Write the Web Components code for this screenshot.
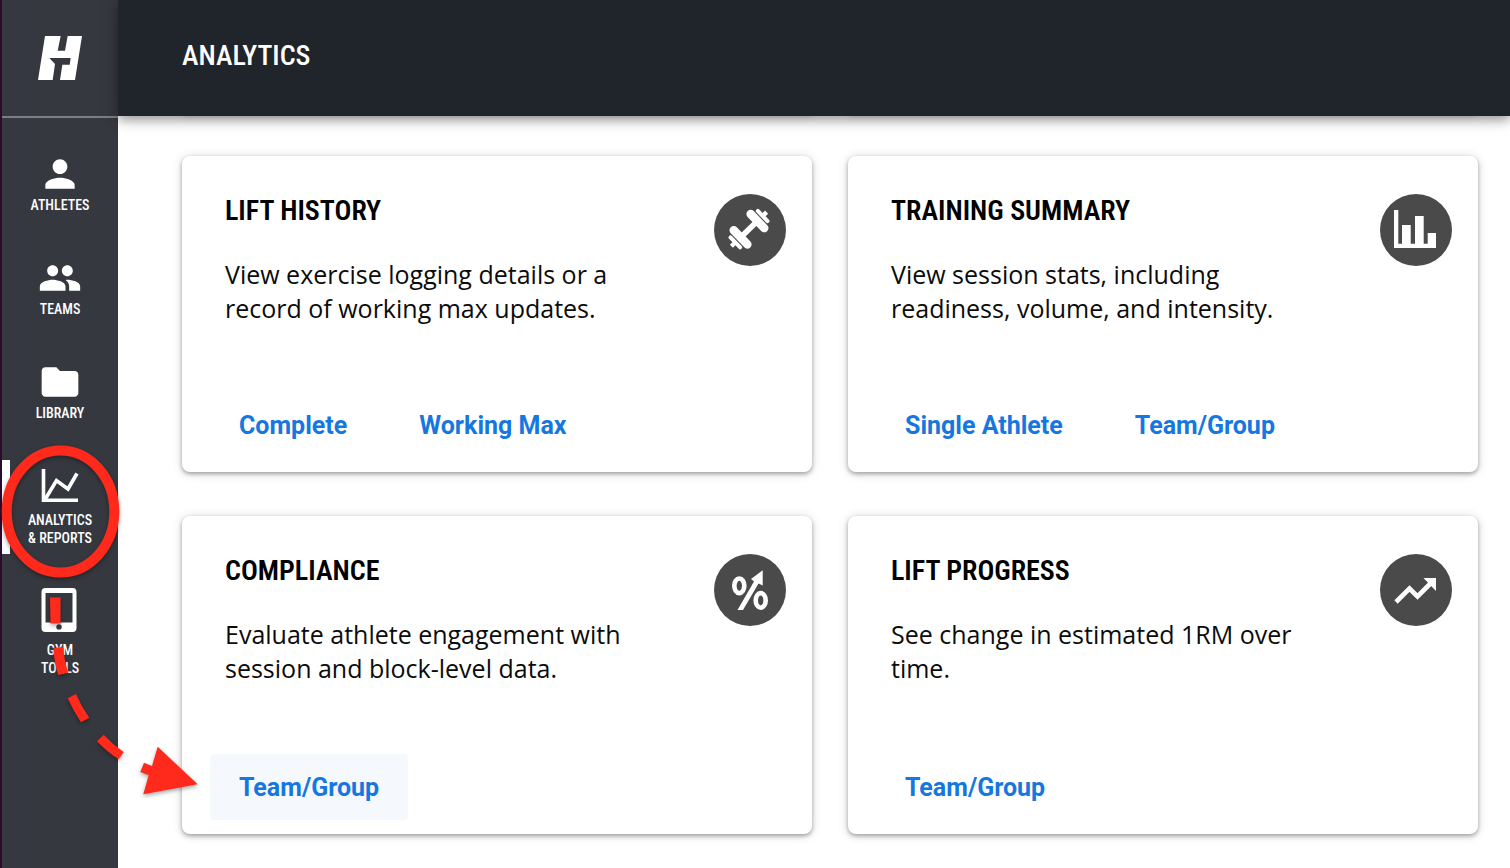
<!DOCTYPE html>
<html lang="en">
<head>
<meta charset="utf-8">
<meta name="viewport" content="width=device-width, initial-scale=1">
<title>Analytics</title>
<style>
  html, body { margin: 0; height: 100%; }
  body { background: #fff; }
</style>
</head>
<body>
<analytics-app></analytics-app>
<script>
const ICONS = {
  athletes: '<svg viewBox="0 0 24 24"><path d="M12 12c2.21 0 4-1.79 4-4s-1.79-4-4-4-4 1.79-4 4 1.79 4 4 4zm0 2c-2.67 0-8 1.34-8 4v2h16v-2c0-2.66-5.33-4-8-4z"/></svg>',
  teams: '<svg viewBox="0 0 24 24"><path d="M16 11c1.66 0 2.99-1.34 2.99-3S17.66 5 16 5s-3 1.34-3 3 1.34 3 3 3zm-8 0c1.66 0 2.99-1.34 2.99-3S9.66 5 8 5 5 6.34 5 8s1.34 3 3 3zm0 2c-2.33 0-7 1.17-7 3.500V19h14v-2.500c0-2.330-4.670-3.500-7-3.500zm8 0c-.29 0-.62.02-.97.05 1.160.84 1.970 1.970 1.970 3.450V19h6v-2.500c0-2.330-4.670-3.500-7-3.500z"/></svg>',
  library: '<svg viewBox="0 0 24 24"><path d="M10 4H4c-1.1 0-1.990.9-1.990 2L2 18c0 1.100.9 2 2 2h16c1.100 0 2-.9 2-2V8c0-1.100-.9-2-2-2h-8l-2-2z"/></svg>',
  analytics: '<svg viewBox="0 0 44 44"><path d="M5.500 6v31.200H40" fill="none" stroke="#fff" stroke-width="3.600"/><path d="M7 36.500 18.500 17.500 30 26 39 10.500" fill="none" stroke="#fff" stroke-width="3.600"/></svg>',
  gym: '<svg viewBox="0 0 44 44"><path fill-rule="evenodd" d="M7.500 0h27a4 4 0 0 1 4 4v36a4 4 0 0 1-4 4h-27a4 4 0 0 1-4-4V4a4 4 0 0 1 4-4zM7.500 5v29.500h27V5zM21 36.200a2.700 2.700 0 1 0 0 5.400 2.700 2.700 0 0 0 0-5.400z"/></svg>',
  dumbbell: '<svg viewBox="0 0 72 72"><g transform="translate(35 35.200) rotate(-44)" fill="#fff"><rect x="-10" y="-2.800" width="20" height="5.600"/><rect x="-16" y="-14" width="8.500" height="28" rx="4.200"/><rect x="7.500" y="-14" width="8.500" height="28" rx="4.200"/><rect x="-21" y="-9" width="4" height="18" rx="2"/><rect x="17" y="-9" width="4" height="18" rx="2"/><path d="M-24.500-2.200h5v4.400h-5zM19.500-2.200h5v4.400h-5z"/></g></svg>',
  bars: '<svg viewBox="0 0 72 72"><path d="M14 16h4.300v33.700H22V31h8.700v18.700H35V22h8.700v27.700h4V39H56v15H14z" fill="#fff"/></svg>',
  percent: '<svg viewBox="0 0 72 72"><g fill="none" stroke="#fff" stroke-width="4.600"><ellipse cx="25.300" cy="31.800" rx="5" ry="7.300"/><ellipse cx="46.700" cy="46.400" rx="5" ry="7.300"/></g><path d="M23.500 56 40 27.500 37 25 48.700 16.300V31.500L44.500 29.500 29 56z" fill="#fff"/></svg>',
  trend: '<svg viewBox="0 0 72 72"><path d="M16 48 29.500 34.500 37.500 42.500 52 28" fill="none" stroke="#fff" stroke-width="4.600"/><path d="M43.500 24H56V37z" fill="#fff"/></svg>'
};
const CAPS = '"Roboto Condensed", "Liberation Sans Narrow", Roboto, sans-serif';

class NavItem extends HTMLElement {
  connectedCallback() {
    this.attachShadow({ mode: 'open' }).innerHTML = `
      <style>
        :host { display: block; min-height: 70px; }
        :host([active]) { min-height: 94px; margin-top: -4px; box-shadow: inset 8px 0 #fff; }
        a { display: flex; flex-direction: column; align-items: center; color: #fff; text-decoration: none; text-align: center; }
        :host([active]) a { padding-top: 3px; gap: 4px; }
        :host([tall]) a { gap: 9px; }
        svg { display: block; width: 44px; height: 44px; fill: #fff; }
        span { font: 500 14px/18px ${CAPS}; text-transform: uppercase; }
      </style>
      <a href="#${this.getAttribute('icon')}">${ICONS[this.getAttribute('icon')]}<span><slot></slot></span></a>`;
  }
}
customElements.define('nav-item', NavItem);

class SideNav extends HTMLElement {
  connectedCallback() {
    this.attachShadow({ mode: 'open' }).innerHTML = `
      <style>
        :host { display: block; background: #36383f; border-left: 2px solid #2b0a2d; }
        .logo { display: flex; align-items: center; justify-content: center; height: 116px; border-bottom: 2px solid #7b7e82; }
        .logo svg { display: block; width: 44px; height: 44px; }
        nav { display: flex; flex-direction: column; gap: 34px; padding-top: 34px; }
      </style>
      <a class="logo" href="#home" aria-label="Home"><svg viewBox="114 108 132 132"><path fill="#fff" d="M135 108h47l-9 44h22l8-44h43l-21 132h-45l7-46h22l3-20h-64l17 18-7 48h-44z"/></svg></a>
      <nav aria-label="Main"><slot></slot></nav>`;
  }
}
customElements.define('side-nav', SideNav);

class PageHeader extends HTMLElement {
  connectedCallback() {
    this.attachShadow({ mode: 'open' }).innerHTML = `
      <style>
        :host { display: block; }
        header { display: flex; align-items: center; box-sizing: border-box; height: 116px; padding: 0 64px 4px; background: #20242b; box-shadow: 0 4px 10px rgba(0,0,0,.34), 0 2px 20px rgba(0,0,0,.12); }
        h1 { margin: 0; color: #fff; font: 500 28px/36px ${CAPS}; text-transform: uppercase; }
      </style>
      <header><h1><slot></slot></h1></header>`;
  }
}
customElements.define('page-header', PageHeader);

class CardLink extends HTMLElement {
  connectedCallback() {
    this.attachShadow({ mode: 'open' }).innerHTML = `
      <style>
        :host { display: block; }
        a { display: block; padding: 17px 29px 15px; border-radius: 4px; color: #1677e0; font: bold 25px/34px Roboto, sans-serif; text-decoration: none; white-space: nowrap; }
        :host([highlighted]) a { background: #f5f9fe; }
      </style>
      <a href="#report"><slot></slot></a>`;
  }
}
customElements.define('card-link', CardLink);

class ReportCard extends HTMLElement {
  connectedCallback() {
    this.attachShadow({ mode: 'open' }).innerHTML = `
      <style>
        :host { display: flex; flex-direction: column; box-sizing: border-box; padding: 36px 26px 14px 28px; border-radius: 8px; background: #fff; box-shadow: 0 2px 4px rgba(0,0,0,.32), 0 1px 12px rgba(0,0,0,.14); }
        .top { display: flex; align-items: flex-start; gap: 44px; padding-left: 15px; }
        .copy { flex: 1; min-width: 0; }
        h2 { margin: 0 0 27px; color: #000; font: 600 28px/38px ${CAPS}; text-transform: uppercase; }
        p { margin: 0; color: #0b0b0b; font: 25px/34px "Open Sans", sans-serif; }
        .icon { flex: none; width: 72px; height: 72px; margin-top: 2px; border-radius: 50%; background: #4a4a4a; }
        .icon svg { display: block; width: 72px; height: 72px; }
        .links { display: flex; flex-wrap: wrap; gap: 14px; margin-top: auto; }
      </style>
      <div class="top">
        <div class="copy"><h2>${this.getAttribute('heading')}</h2><p>${this.getAttribute('text')}</p></div>
        <div class="icon">${ICONS[this.getAttribute('icon')]}</div>
      </div>
      <div class="links"><slot></slot></div>`;
  }
}
customElements.define('report-card', ReportCard);

/* Tutorial annotation: a ring on the active item and a dashed arrow to the report. */
class GuideArrow extends HTMLElement {
  connectedCallback() {
    this.attachShadow({ mode: 'open' }).innerHTML = `
      <style>
        :host { position: absolute; left: 0; top: 440px; z-index: 5; pointer-events: none; }
        svg { display: block; width: 210px; height: 370px; filter: drop-shadow(0 2px 2px rgba(0,0,0,.35)); }
      </style>
      <svg viewBox="0 440 210 370" aria-hidden="true">
        <ellipse cx="60.500" cy="511.500" rx="53.800" ry="61" fill="none" stroke="#ff2a1c" stroke-width="10"/>
        <path fill="#ff2a1c" d="M50 597.500h10.500v26H50.500zM53.300 648.300l10-1.600Q64 660 68.300 672.700l-10 2.300Q54 661 53.300 648.300zM67.700 698.300 76 694q5 12 13.300 23.700l-8.300 4.600q-8-12-13.300-24zM97 741.300l6.700-6.600q9 10 20 17.300l-5 7.300Q107 752 97 741.300zM140.300 772l3.700-9.300 8 3.300 5.700-19.300 40 37.600-54.400 10 5.400-19z"/>
      </svg>`;
  }
}
customElements.define('guide-arrow', GuideArrow);

class AnalyticsApp extends HTMLElement {
  connectedCallback() {
    this.attachShadow({ mode: 'open' }).innerHTML = `
      <style>
        :host { display: grid; grid-template-columns: 118px minmax(0, 1fr); min-height: 100%; position: relative; overflow: hidden; }
        page-header { position: relative; z-index: 2; }
        main { display: grid; grid-template-columns: repeat(2, minmax(0, 1fr)); grid-template-rows: 8px minmax(316px, auto) minmax(318px, auto); column-gap: 36px; row-gap: 44px; margin-top: -12px; padding: 0 32px 34px 64px; }
        .previous { border-radius: 8px; box-shadow: 0 2px 4px rgba(0,0,0,.32), 0 1px 12px rgba(0,0,0,.14); }
      </style>
      <side-nav>
        <nav-item icon="athletes">Athletes</nav-item>
        <nav-item icon="teams">Teams</nav-item>
        <nav-item icon="library">Library</nav-item>
        <nav-item icon="analytics" active>Analytics<br>&amp; Reports</nav-item>
        <nav-item icon="gym" tall>Gym<br>Tools</nav-item>
      </side-nav>
      <div>
        <page-header>Analytics</page-header>
        <main>
          <div class="previous"></div><div class="previous"></div>
          <report-card heading="Lift History" icon="dumbbell" text="View exercise logging details or a record of working max updates.">
            <card-link>Complete</card-link><card-link>Working Max</card-link>
          </report-card>
          <report-card heading="Training Summary" icon="bars" text="View session stats, including readiness, volume, and intensity.">
            <card-link>Single Athlete</card-link><card-link>Team/Group</card-link>
          </report-card>
          <report-card heading="Compliance" icon="percent" text="Evaluate athlete engagement with session and block-level data.">
            <card-link highlighted>Team/Group</card-link>
          </report-card>
          <report-card heading="Lift Progress" icon="trend" text="See change in estimated 1RM over time.">
            <card-link>Team/Group</card-link>
          </report-card>
        </main>
      </div>
      <guide-arrow></guide-arrow>`;
  }
}
customElements.define('analytics-app', AnalyticsApp);
</script>
</body>
</html>
